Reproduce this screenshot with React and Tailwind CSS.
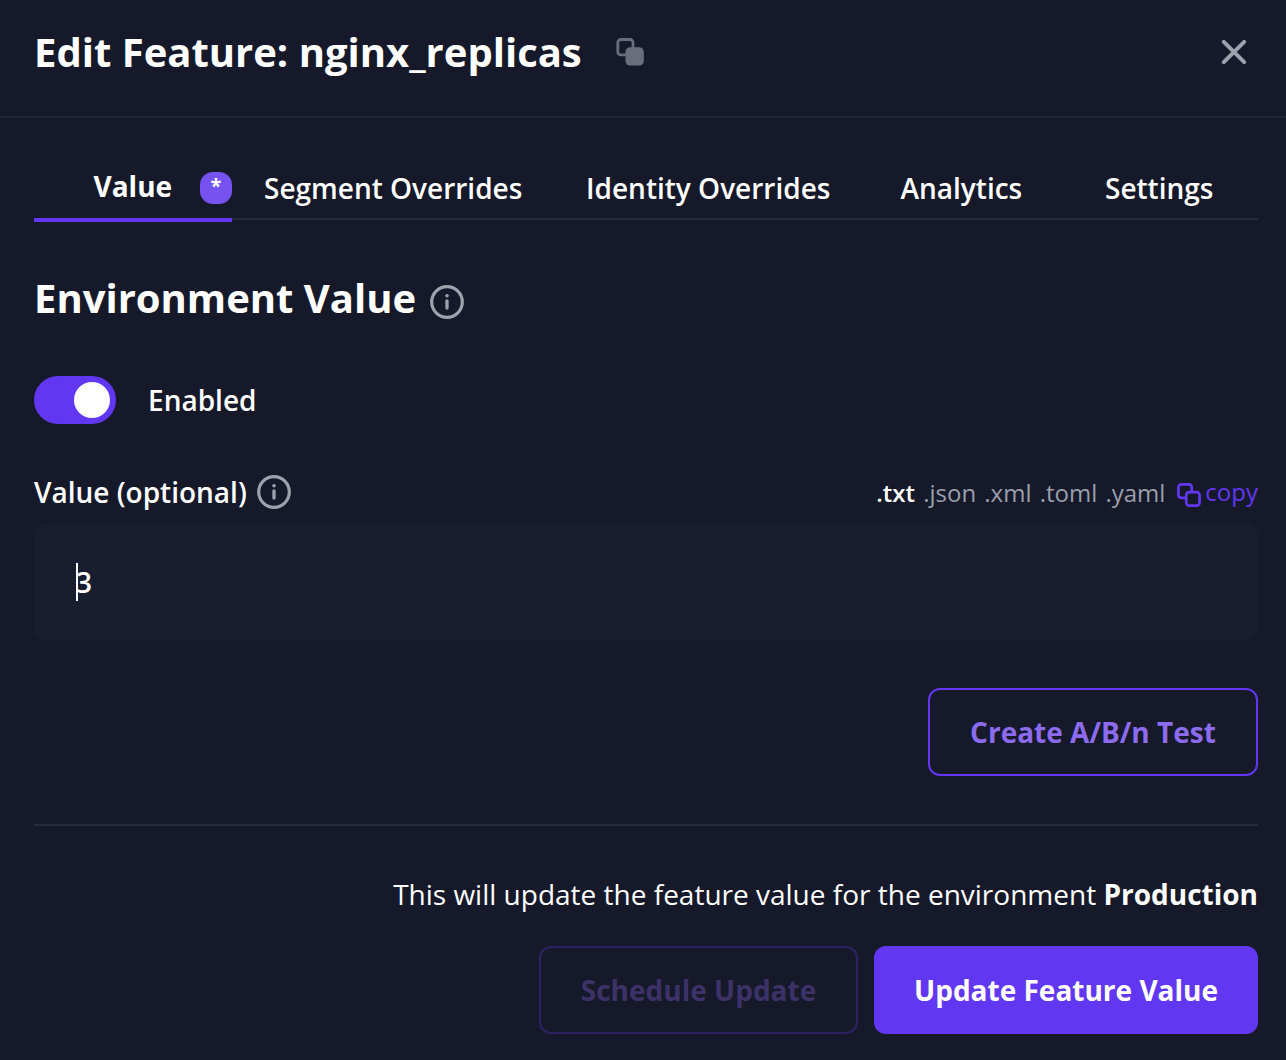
function Info({ className }) {
  return (
    <svg className={className} width="34" height="34" viewBox="0 0 34 34" fill="none">
      <circle cx="17" cy="17" r="15.3" stroke="#9da2ad" strokeWidth="3.2" />
      <path d="M17 15.800v7.200" stroke="#9da2ad" strokeWidth="3.3" strokeLinecap="round" />
      <circle cx="17" cy="10.700" r="1.800" fill="#9da2ad" />
    </svg>
  );
}

function Tab({ className, children }) {
  return <button className={`h-[60px] shrink-0 text-left whitespace-nowrap pt-[10px] leading-[38px] font-semibold ${className}`}>{children}</button>;
}

export default function App() {
  return (
    <div className="flex h-[1060px] w-[1286px] flex-col overflow-hidden bg-[#161929] text-[28px] text-white [font-family:'Open_Sans',sans-serif]">
      <header className="flex h-[118px] shrink-0 items-start border-b-2 border-[#232636] pl-[34px] pr-[38px]">
        <h1 className="mt-6 text-[40px] leading-[56px] font-bold whitespace-nowrap">Edit Feature: nginx_replicas</h1>
        <svg className="mt-[38px] ml-[34px]" width="28" height="28" viewBox="0 0 28 28" fill="none">
          <path d="M10 16.800H4.800a3 3 0 0 1-3-3V4.500a3 3 0 0 1 3-3H14a3 3 0 0 1 3 3v6" stroke="#686e7b" strokeWidth="2.800" />
          <rect x="9.500" y="9.300" width="18.300" height="18.300" rx="4.500" fill="#686e7b" />
        </svg>
        <svg className="mt-[38px] ml-auto" width="28" height="28" viewBox="0 0 28 28" fill="none">
          <path d="M3.800 3.800l20.400 20.400M24.200 3.800l-20.400 20.400" stroke="#9da2ad" strokeWidth="4" strokeLinecap="round" />
        </svg>
      </header>
      <main className="flex flex-col pl-[34px] pr-7">
        <nav className="mt-[35px] flex h-[67px] border-b-2 border-[#282b3a]">
          <button className="flex h-[69px] w-[198px] shrink-0 border-b-4 border-[#6137f2] pl-[59.500px]">
            <span className="mt-[14px] w-[106.500px] text-left leading-[38px] font-bold">Value</span>
            <span className="mt-[19px] flex h-8 w-8 items-center justify-center rounded-[13px] bg-[#7653f1] pb-1 text-[20px] leading-7 font-bold">*</span>
          </button>
          <Tab className="ml-8 w-[322px]">Segment Overrides</Tab>
          <Tab className="w-[314.500px]">Identity Overrides</Tab>
          <Tab className="w-[204.500px]">Analytics</Tab>
          <Tab className="">Settings</Tab>
        </nav>
        <div className="mt-[50px] flex h-14">
          <h2 className="text-[40px] leading-[56px] font-bold">Environment Value</h2>
          <Info className="mt-[15px] ml-[14px]" />
        </div>
        <div className="mt-[50px] flex h-12 items-center">
          <button aria-label="Enabled" className="flex h-12 w-[82px] items-center justify-end rounded-full bg-[#6137f2] pr-1.5"><span className="h-9 w-9 rounded-full bg-white" /></button>
          <span className="ml-8 font-semibold">Enabled</span>
        </div>
        <div className="mt-[48px] flex h-10 items-center">
          <span className="font-semibold">Value (optional)</span>
          <Info className="ml-2.5" />
          <div className="ml-auto flex items-center text-[24px] text-[#9a9fac]">
            <div className="flex gap-[8.200px] pt-0.5">
              <span className="font-semibold text-white">.txt</span><span>.json</span><span>.xml</span><span>.toml</span><span>.yaml</span>
            </div>
            <button className="ml-3 flex items-center gap-1 text-[#6137f2]">
              <svg className="mt-1.5" width="24" height="24" viewBox="0 0 24 24" fill="none" stroke="currentColor" strokeWidth="2.700"><path d="M8.500 14.800H4.400a3 3 0 0 1-3-3V4.400a3 3 0 0 1 3-3h7.400a3 3 0 0 1 3 3v4.200" /><rect x="9.200" y="9.200" width="13.400" height="13.400" rx="3" /></svg>
              <span>copy</span>
            </button>
          </div>
        </div>
        <div className="mt-3 flex h-[116px] items-center rounded-xl bg-[#181d2f] pl-[42px]">
          <span className="h-[38px] w-0.5 bg-white" /><span className="-ml-0.5 font-semibold">3</span>
        </div>
        <button className="mt-12 h-[88px] w-[330px] self-end rounded-xl border-2 border-[#6137f2] font-bold text-[#8c6bee]">Create A/B/n Test</button>
        <div className="mt-12 h-0.5 bg-[#282b3a]" />
        <p className="mt-12 text-right leading-10">This will update the feature value for the environment <b>Production</b></p>
        <div className="mt-8 flex justify-end gap-4">
          <button className="h-[88px] w-[319px] rounded-xl border-2 border-[#2d2264] font-bold text-[#3c3268]">Schedule Update</button>
          <button className="h-[88px] w-96 rounded-xl bg-[#6137f2] font-bold">Update Feature Value</button>
        </div>
      </main>
    </div>
  );
}
